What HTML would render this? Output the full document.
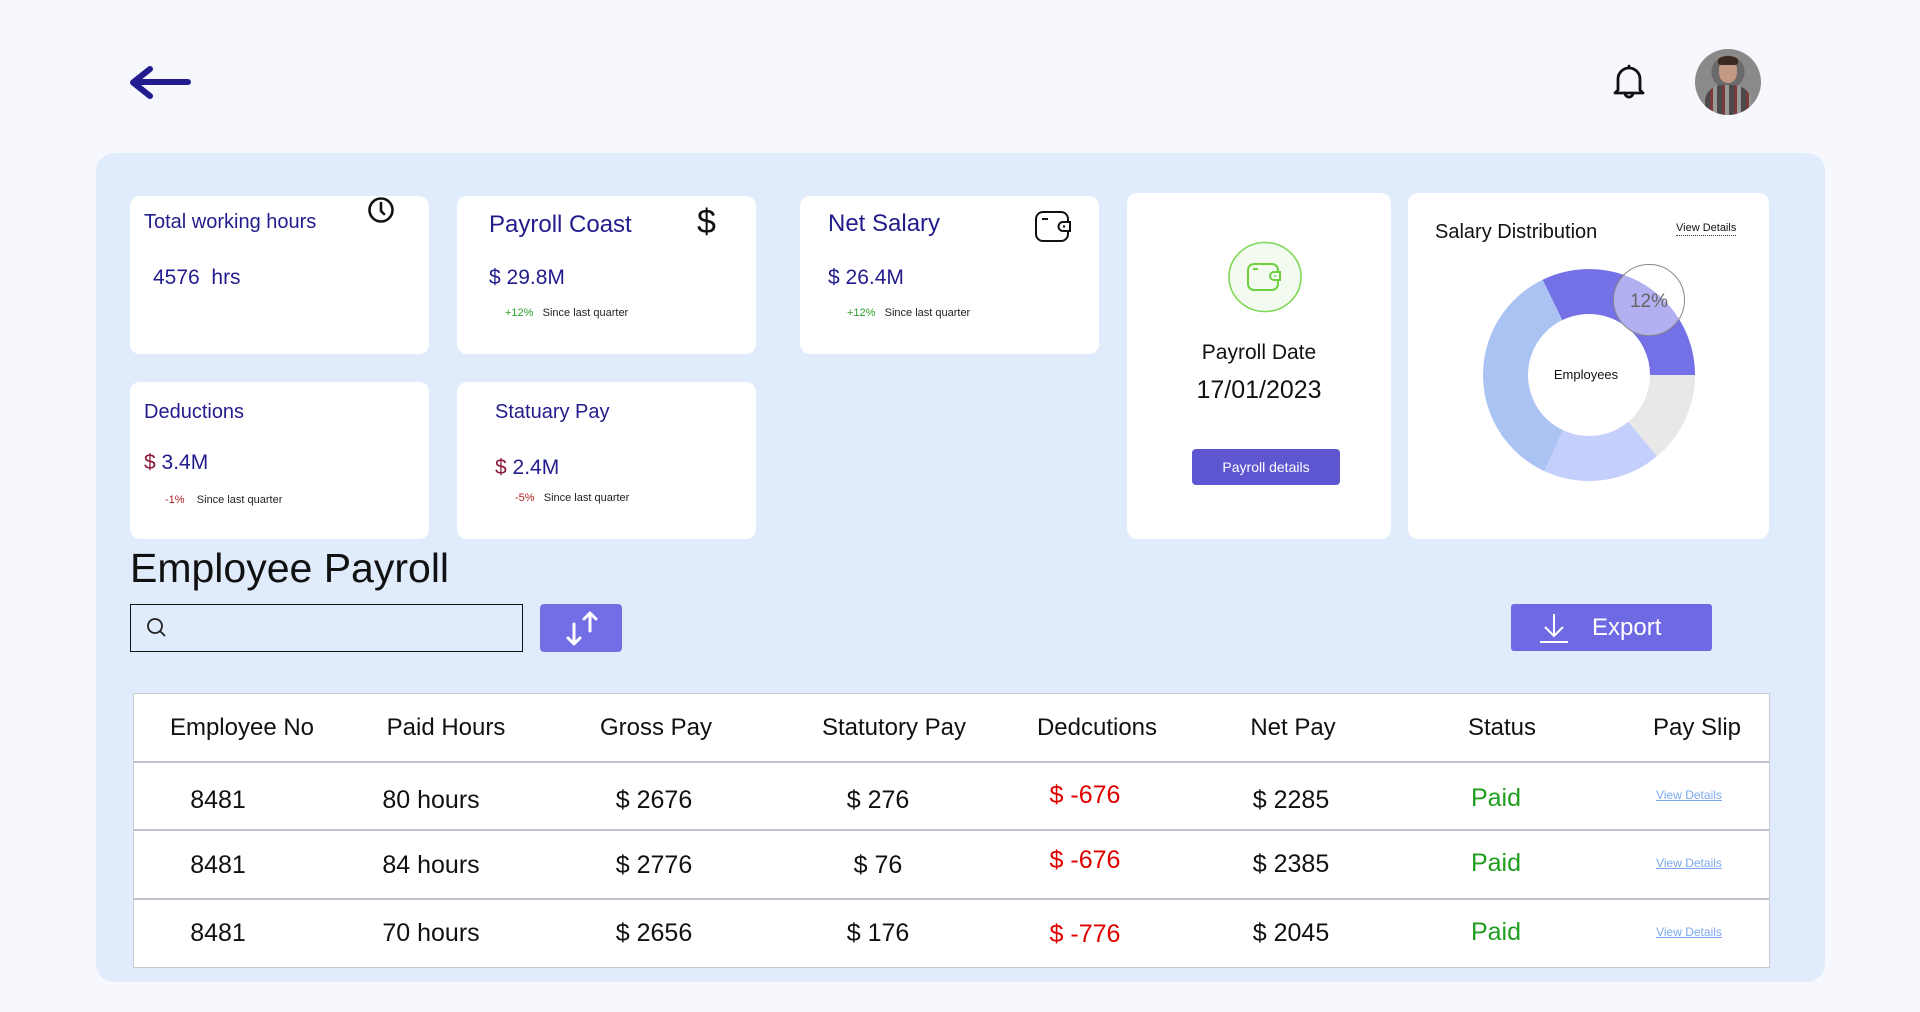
<!DOCTYPE html>
<html><head><meta charset="utf-8"><style>
*{margin:0;padding:0;box-sizing:border-box}
body{width:1920px;height:1012px;background:#f6f8fe;font-family:"Liberation Sans",sans-serif;position:relative;overflow:hidden;color:#111}
.a{position:absolute;white-space:nowrap}
.panel{position:absolute;left:96px;top:153px;width:1729px;height:829px;background:#e0ecfc;border-radius:18px}
.card{position:absolute;background:#fff;border-radius:10px}
.nv{color:#221c8c}
.sm{font-size:11px;color:#222}
.g{color:#2aa02a}.r{color:#b02020}
.th{font-size:24px;color:#111;transform:translateX(-50%)}
.td{font-size:25px;color:#111;transform:translateX(-50%)}
.row{position:absolute;left:134px;width:1635px;border-top:2px solid #bdc3cc}
.vd{font-size:12px;color:#7aa8f0;text-decoration:underline}
</style></head><body>
<svg class="a" style="left:128px;top:66px" width="64" height="34" viewBox="0 0 64 34"><path d="M60 16H6M22 3L5 16.5L22 30" fill="none" stroke="#231c8f" stroke-width="6" stroke-linecap="round" stroke-linejoin="round"/></svg>
<svg class="a" style="left:1612px;top:64px" width="34" height="36" viewBox="0 0 34 36"><path d="M6 26V15a11 11 0 0 1 22 0v11l3 3H3z M17 4V2 M13 29a4 4 0 0 0 8 0" fill="none" stroke="#111" stroke-width="2.8" stroke-linejoin="round" stroke-linecap="round"/></svg>
<div class="a" style="left:1695px;top:49px;width:66px;height:66px;border-radius:50%;background:radial-gradient(circle at 50% 35%,#a08070 0 14%,#6a6a6a 15% 30%,#8a8a8a 31%),#777;overflow:hidden"><div style="position:absolute;left:10px;top:36px;width:46px;height:40px;border-radius:40% 40% 0 0;background:repeating-linear-gradient(90deg,#4a4a4a 0 5px,#7a3a3a 5px 8px,#999 8px 12px)"></div><div style="position:absolute;left:24px;top:10px;width:18px;height:24px;border-radius:45%;background:#c49a84"></div><div style="position:absolute;left:23px;top:7px;width:20px;height:9px;border-radius:50% 50% 20% 20%;background:#3a2a22"></div></div>

<div class="panel"></div>

<div class="card" style="left:130px;top:196px;width:299px;height:158px"></div>
<div class="a nv" style="left:144px;top:211px;font-size:20px">Total working hours</div>
<svg class="a" style="left:367px;top:196px" width="28" height="28" viewBox="0 0 28 28"><circle cx="14" cy="14" r="11.5" fill="none" stroke="#111" stroke-width="2.6"/><path d="M14 7v8l3 3" fill="none" stroke="#111" stroke-width="2.6" stroke-linecap="round"/></svg>
<div class="a nv" style="left:153px;top:266px;font-size:21px">4576&nbsp; hrs</div>

<div class="card" style="left:457px;top:196px;width:299px;height:158px"></div>
<div class="a nv" style="left:489px;top:211px;font-size:24px">Payroll Coast</div>
<div class="a" style="left:697px;top:203px;font-size:34px;color:#111">$</div>
<div class="a nv" style="left:489px;top:266px;font-size:21px">$ 29.8M</div>
<div class="a sm" style="left:505px;top:307px"><span class="g">+12%</span>&nbsp;&nbsp; Since last quarter</div>

<div class="card" style="left:800px;top:196px;width:299px;height:158px"></div>
<div class="a nv" style="left:828px;top:210px;font-size:24px">Net Salary</div>
<svg class="a" style="left:1034px;top:210px" width="38" height="34" viewBox="0 0 38 34"><rect x="2" y="2" width="32" height="29" rx="7" fill="none" stroke="#111" stroke-width="2"/><path d="M8 9h6" stroke="#111" stroke-width="2"/><path d="M36 12h-7a4 4 0 0 0 0 9h7z" fill="#fff" stroke="#111" stroke-width="2"/><circle cx="30" cy="16.5" r="1.2" fill="#111"/></svg>
<div class="a nv" style="left:828px;top:266px;font-size:21px">$ 26.4M</div>
<div class="a sm" style="left:847px;top:307px"><span class="g">+12%</span>&nbsp;&nbsp; Since last quarter</div>

<div class="card" style="left:130px;top:382px;width:299px;height:157px"></div>
<div class="a nv" style="left:144px;top:401px;font-size:20px">Deductions</div>
<div class="a nv" style="left:144px;top:451px;font-size:21px"><span style="color:#8b1a3a">$</span> 3.4M</div>
<div class="a sm" style="left:165px;top:494px"><span class="r">-1%</span>&nbsp;&nbsp;&nbsp; Since last quarter</div>

<div class="card" style="left:457px;top:382px;width:299px;height:157px"></div>
<div class="a nv" style="left:495px;top:401px;font-size:20px">Statuary Pay</div>
<div class="a nv" style="left:495px;top:456px;font-size:21px"><span style="color:#8b1a3a">$</span> 2.4M</div>
<div class="a sm" style="left:515px;top:492px"><span class="r">-5%</span>&nbsp;&nbsp; Since last quarter</div>

<div class="card" style="left:1127px;top:193px;width:264px;height:346px"></div>
<svg class="a" style="left:1227px;top:241px" width="76" height="72" viewBox="0 0 76 72"><ellipse cx="38" cy="36" rx="36" ry="34.5" fill="#f3faf0" stroke="#7ed957" stroke-width="1.6"/><rect x="21" y="23" width="30" height="26" rx="6" fill="none" stroke="#6fd13f" stroke-width="2"/><path d="M26 28h5" stroke="#6fd13f" stroke-width="2"/><path d="M53 31h-6a4 4 0 0 0 0 8h6z" fill="#f3faf0" stroke="#6fd13f" stroke-width="2"/><circle cx="48" cy="35" r="1" fill="#6fd13f"/></svg>
<div class="a" style="left:1259px;top:341px;transform:translateX(-50%);font-size:21px;color:#111">Payroll Date</div>
<div class="a" style="left:1259px;top:376px;transform:translateX(-50%);font-size:25px;color:#111">17/01/2023</div>
<div class="a" style="left:1192px;top:449px;width:148px;height:36px;background:#5e56d0;border-radius:4px;color:#fff;font-size:14px;text-align:center;line-height:36px">Payroll details</div>

<div class="card" style="left:1408px;top:193px;width:361px;height:346px"></div>
<div class="a" style="left:1435px;top:221px;font-size:20px;color:#111">Salary Distribution</div>
<div class="a" style="left:1676px;top:222px;font-size:11px;color:#111;border-bottom:1.5px dotted #333;line-height:13px">View Details</div>
<svg class="a" style="left:1408px;top:193px" width="361" height="346" viewBox="0 0 361 346">
<g transform="rotate(-116 181 182)" fill="none" stroke-width="45">
<circle cx="181" cy="182" r="83.5" stroke="#7470e6" stroke-dasharray="169 400"/>
</g>
<g transform="rotate(0 181 182)" fill="none" stroke-width="45">
<circle cx="181" cy="182" r="83.5" stroke="#e8e8e8" stroke-dasharray="0 169 72.9 400" transform="rotate(-116 181 182)"/>
<circle cx="181" cy="182" r="83.5" stroke="#c4d0fb" stroke-dasharray="0 241.9 94.7 400" transform="rotate(-116 181 182)"/>
<circle cx="181" cy="182" r="83.5" stroke="#abc3f3" stroke-dasharray="0 336.6 188 400" transform="rotate(-116 181 182)"/>
</g>
<circle cx="241" cy="107" r="35.5" fill="rgba(255,255,255,0.45)" stroke="#888" stroke-width="1"/>
<text x="241" y="114" text-anchor="middle" font-family="Liberation Sans" font-size="19" fill="#666">12%</text>
<text x="178" y="186" text-anchor="middle" font-family="Liberation Sans" font-size="13" fill="#111">Employees</text>
</svg>

<div class="a" style="left:130px;top:545px;font-size:41px;color:#111">Employee Payroll</div>
<div class="a" style="left:130px;top:604px;width:393px;height:48px;border:1.6px solid #111"></div>
<svg class="a" style="left:145px;top:616px" width="24" height="24" viewBox="0 0 24 24"><circle cx="10" cy="10" r="7" fill="none" stroke="#222" stroke-width="1.8"/><path d="M15 15l5 5" stroke="#222" stroke-width="1.8"/></svg>
<div class="a" style="left:540px;top:604px;width:82px;height:48px;background:#736ee6;border-radius:4px"></div>
<svg class="a" style="left:560px;top:610px" width="44" height="36" viewBox="0 0 44 36"><path d="M14 14v20M8 28l6 6 6-6M30 3v18M24 9l6-6 6 6" fill="none" stroke="#fff" stroke-width="3" stroke-linecap="round" stroke-linejoin="round"/></svg>
<div class="a" style="left:1511px;top:604px;width:201px;height:47px;background:#6f69e4;border-radius:3px"></div>
<svg class="a" style="left:1538px;top:612px" width="32" height="32" viewBox="0 0 32 32"><path d="M16 2v22M7 15l9 9 9-9M2 30h28" fill="none" stroke="#fff" stroke-width="2"/></svg>
<div class="a" style="left:1592px;top:614px;font-size:24px;color:#fff">Export</div>

<div class="a" style="left:133px;top:693px;width:1637px;height:275px;border:1.5px solid #c8ccd2;background:#fff"></div>
<div class="row" style="top:761px"></div><div class="row" style="top:829px"></div><div class="row" style="top:898px"></div>
<div class="a th" style="left:242px;top:714px">Employee No</div>
<div class="a th" style="left:446px;top:714px">Paid Hours</div>
<div class="a th" style="left:656px;top:714px">Gross Pay</div>
<div class="a th" style="left:894px;top:714px">Statutory Pay</div>
<div class="a th" style="left:1097px;top:714px">Dedcutions</div>
<div class="a th" style="left:1293px;top:714px">Net Pay</div>
<div class="a th" style="left:1502px;top:714px">Status</div>
<div class="a th" style="left:1697px;top:714px">Pay Slip</div>

<div class="a td" style="left:218px;top:786px">8481</div>
<div class="a td" style="left:431px;top:786px">80 hours</div>
<div class="a td" style="left:654px;top:786px">$ 2676</div>
<div class="a td" style="left:878px;top:786px">$ 276</div>
<div class="a td" style="left:1085px;top:781px;color:#e00000">$ -676</div>
<div class="a td" style="left:1291px;top:786px">$ 2285</div>
<div class="a td" style="left:1496px;top:784px;color:#1f9e1f">Paid</div>
<div class="a td vd" style="left:1689px;top:788px;font-size:12px">View Details</div>

<div class="a td" style="left:218px;top:851px">8481</div>
<div class="a td" style="left:431px;top:851px">84 hours</div>
<div class="a td" style="left:654px;top:851px">$ 2776</div>
<div class="a td" style="left:878px;top:851px">$ 76</div>
<div class="a td" style="left:1085px;top:846px;color:#e00000">$ -676</div>
<div class="a td" style="left:1291px;top:850px">$ 2385</div>
<div class="a td" style="left:1496px;top:849px;color:#1f9e1f">Paid</div>
<div class="a td vd" style="left:1689px;top:856px;font-size:12px">View Details</div>

<div class="a td" style="left:218px;top:919px">8481</div>
<div class="a td" style="left:431px;top:919px">70 hours</div>
<div class="a td" style="left:654px;top:919px">$ 2656</div>
<div class="a td" style="left:878px;top:919px">$ 176</div>
<div class="a td" style="left:1085px;top:920px;color:#e00000">$ -776</div>
<div class="a td" style="left:1291px;top:919px">$ 2045</div>
<div class="a td" style="left:1496px;top:918px;color:#1f9e1f">Paid</div>
<div class="a td vd" style="left:1689px;top:925px;font-size:12px">View Details</div>
</body></html>
